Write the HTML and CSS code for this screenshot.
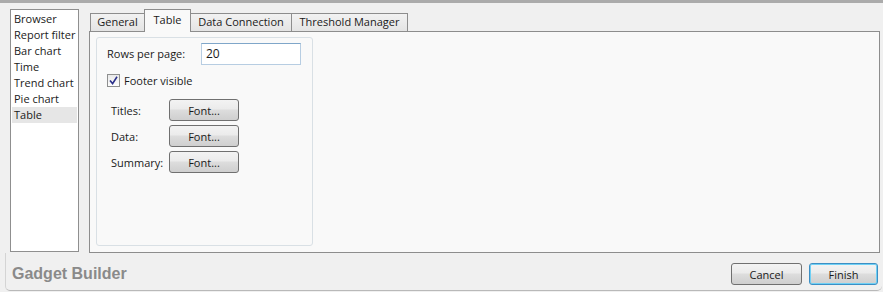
FILE: index.html
```html
<!DOCTYPE html>
<html>
<head>
<meta charset="utf-8">
<link rel="stylesheet" href="styles.css">
</head>
<body>
<div class="topbar"></div>
<div class="window">
  <div class="main">
    <ul class="list">
      <li>Browser</li>
      <li>Report filter</li>
      <li>Bar chart</li>
      <li>Time</li>
      <li>Trend chart</li>
      <li>Pie chart</li>
      <li class="selected">Table</li>
    </ul>
    <div class="tabs">
      <div class="tabstrip">
        <div class="tab tab-general">General</div>
        <div class="tab active tab-table">Table</div>
        <div class="tab tab-data">Data Connection</div>
        <div class="tab tab-threshold">Threshold Manager</div>
      </div>
      <div class="panel">
        <div class="group">
          <div class="row rows">
            <span class="label">Rows per page:</span>
            <div class="input">20</div>
          </div>
          <div class="row check">
            <span class="box">
              <svg width="9" height="9" viewBox="0 0 9 9"><path d="M1 4.5 L3.6 7.6 L8 0.8" fill="none" stroke="#2a2f8a" stroke-width="1.6"/></svg>
            </span>
            <span>Footer visible</span>
          </div>
          <div class="fonts">
            <div class="frow"><span class="flabel">Titles:</span><button class="btn font">Font...</button></div>
            <div class="frow"><span class="flabel">Data:</span><button class="btn font">Font...</button></div>
            <div class="frow"><span class="flabel">Summary:</span><button class="btn font">Font...</button></div>
          </div>
        </div>
      </div>
    </div>
  </div>
  <div class="footer">
    <span class="brand">Gadget Builder</span>
    <div class="actions">
      <button class="btn cancel">Cancel</button>
      <button class="btn finish">Finish</button>
    </div>
  </div>
</div>
</body>
</html>
```

FILE: styles.css
```css
* { box-sizing: border-box; }
html, body {
  margin: 0;
  padding: 0;
  width: 883px;
  height: 292px;
  overflow: hidden;
  background: #f0f0f0;
  font-family: "Open Sans", "Liberation Sans", sans-serif;
  font-size: 11px;
  color: #1a1a1a;
}
.topbar {
  height: 3px;
  background: #ababab;
}
.window {
  height: 288px;
  margin: 0 1px 0 5px;
  display: flex;
  flex-direction: column;
}
.main {
  display: flex;
  padding: 6px 2px 0 5px;
  gap: 10px;
}
.list {
  list-style: none;
  margin: 0;
  width: 69px;
  height: 243px;
  background: #fff;
  border: 1px solid #8f8f8f;
  padding: 1px 1px;
}
.list li {
  height: 16px;
  line-height: 16px;
  padding-left: 2px;
  white-space: nowrap;
}
.list li.selected {
  background: #e6e6e6;
}
.tabs {
  flex: 1;
  display: flex;
  flex-direction: column;
}
.tabstrip {
  display: flex;
  align-items: flex-end;
  height: 22px;
  padding-left: 1px;
  position: relative;
  z-index: 1;
}
.tab {
  height: 18px;
  line-height: 16px;
  border: 1px solid #8d8d8d;
  border-bottom: none;
  background: linear-gradient(#f2f2f2, #e4e4e4);
  text-align: center;
  margin-right: -1px;
  white-space: nowrap;
}
.tab-general { width: 55px; }
.tab-table { width: 47px; }
.tab-data { width: 102px; }
.tab-threshold { width: 117px; }
.tab.active {
  height: 23px;
  line-height: 20px;
  background: #f9f9f9;
  margin-bottom: -1px;
}
.panel {
  height: 222px;
  border: 1px solid #8d8d8d;
  background: #f9f9f9;
  padding: 5px 6px;
}
.group {
  width: 217px;
  height: 209px;
  border: 1px solid #d9e0e5;
  border-radius: 3px;
  padding: 5px 0 0 10px;
}
.row {
  display: flex;
  align-items: center;
}
.rows {
  height: 21px;
}
.rows .label {
  width: 94px;
}
.input {
  width: 100px;
  height: 22px;
  border: 1px solid #b7cde2;
  border-top-color: #7fa6c9;
  background: #fff;
  padding-left: 4px;
  line-height: 20px;
  font-size: 12px;
}
.check {
  margin-top: 9px;
  height: 15px;
  gap: 4px;
}
.box {
  width: 13px;
  height: 13px;
  border: 1px solid #8e8f8f;
  background: linear-gradient(#e9e9e9, #fdfdfd);
  display: flex;
  align-items: center;
  justify-content: center;
}
.fonts {
  margin-top: 11px;
  padding-left: 4px;
  display: flex;
  flex-direction: column;
  gap: 4px;
}
.frow {
  display: flex;
  align-items: center;
}
.flabel {
  width: 58px;
}
.btn {
  font-family: inherit;
  font-size: 11px;
  color: #1a1a1a;
  height: 22px;
  padding: 0;
  border: 1px solid #707070;
  border-radius: 3px;
  background: linear-gradient(#f3f3f3 0%, #ebebeb 45%, #dddddd 50%, #cfcfcf 100%);
}
.font {
  width: 70px;
}
.footer {
  flex: 1;
  display: flex;
  align-items: center;
  justify-content: space-between;
  padding: 5px 4px 0 6px;
  border-left: 1px solid #d4d4d4;
  border-bottom: 1px solid #b9b9b9;
  border-bottom-left-radius: 5px;
  border-bottom-right-radius: 5px;
}
.brand {
  font-family: "Liberation Sans", Arial, sans-serif;
  font-weight: bold;
  font-size: 16px;
  color: #8a8a8a;
}
.actions {
  display: flex;
  gap: 7px;
}
.cancel { width: 71px; }
.finish {
  width: 69px;
  border-color: #3c8fc4;
  box-shadow: inset 0 0 0 1px #6fd0f5;
}
```
